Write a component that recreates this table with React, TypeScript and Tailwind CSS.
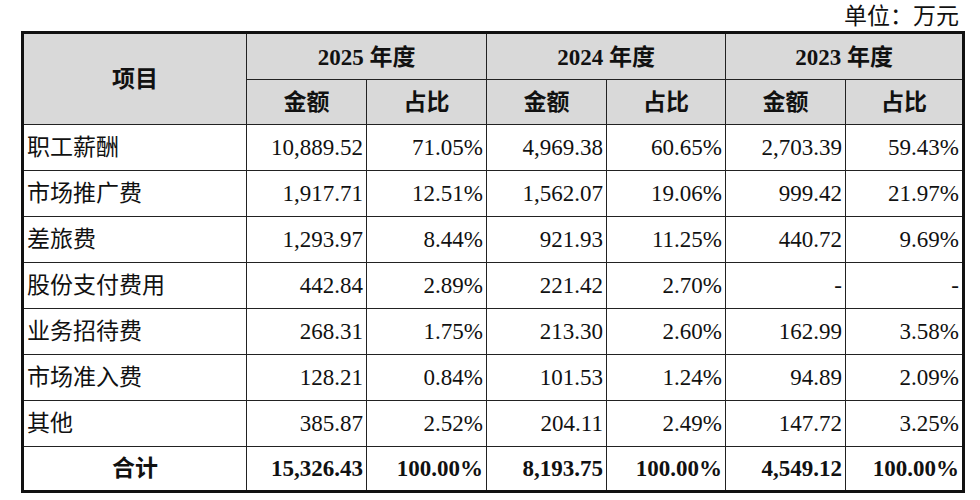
const rows = [
  ["职工薪酬", "10,889.52", "71.05%", "4,969.38", "60.65%", "2,703.39", "59.43%"],
  ["市场推广费", "1,917.71", "12.51%", "1,562.07", "19.06%", "999.42", "21.97%"],
  ["差旅费", "1,293.97", "8.44%", "921.93", "11.25%", "440.72", "9.69%"],
  ["股份支付费用", "442.84", "2.89%", "221.42", "2.70%", "-", "-"],
  ["业务招待费", "268.31", "1.75%", "213.30", "2.60%", "162.99", "3.58%"],
  ["市场准入费", "128.21", "0.84%", "101.53", "1.24%", "94.89", "2.09%"],
  ["其他", "385.87", "2.52%", "204.11", "2.49%", "147.72", "3.25%"],
];

const total = ["15,326.43", "100.00%", "8,193.75", "100.00%", "4,549.12", "100.00%"];
const years = ["2025", "2024", "2023"];

const App = () => {
  return (
    <div
      className="w-[980px] h-[500px] bg-white text-[#111] text-[23px] leading-none overflow-hidden"
      style={{ fontFamily: '"Liberation Serif", "Noto Sans CJK SC", serif' }}
    >
      {/* Unit caption */}
      <div className="h-[31px] flex items-center justify-end pr-[21px] pt-[2px]">
        单位：万元
      </div>

      {/* Table */}
      <div className="ml-[21px] w-[944px] border-[3px] border-[#111]">
        <div className="grid grid-cols-[222px_119px_119px_119px_118px_119px_116px] grid-rows-[45px_44px_repeat(7,45px)_43px] gap-px bg-[#222]">
          {/* Header */}
          <div className="row-span-2 bg-[#d9d9d9] flex items-center justify-center font-bold">项目</div>
          {years.map((y) => (
            <div key={y} className="col-span-2 bg-[#d9d9d9] flex items-center justify-center font-bold pt-[2px]">
              {y} 年度
            </div>
          ))}
          {years.map((y) => (
            <div key={y} className="contents">
              <div className="bg-[#d9d9d9] flex items-center justify-center font-bold">金额</div>
              <div className="bg-[#d9d9d9] flex items-center justify-center font-bold">占比</div>
            </div>
          ))}

          {/* Body rows */}
          {rows.map((r) => (
            <div key={r[0]} className="contents">
              <div className="bg-white flex items-center pl-[3px]">{r[0]}</div>
              {r.slice(1).map((v, i) => (
                <div key={i} className="bg-white flex items-center justify-end pr-[3px]">
                  {v}
                </div>
              ))}
            </div>
          ))}

          {/* Total */}
          <div className="bg-white flex items-center justify-center font-bold">合计</div>
          {total.map((v, i) => (
            <div key={i} className="bg-white flex items-center justify-end pr-[3px] font-bold">
              {v}
            </div>
          ))}
        </div>
      </div>
    </div>
  );
};

export default App;
